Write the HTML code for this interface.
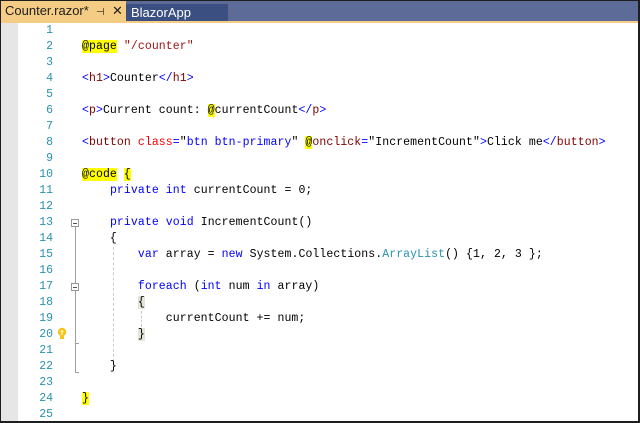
<!DOCTYPE html>
<html><head><style>
body{margin:0;width:640px;height:423px;overflow:hidden;background:#fff;position:relative;font-family:"Liberation Mono",monospace}
.tabbar{position:absolute;left:1px;top:1px;width:638px;height:20px;background:#5d6b99}
.tab1{position:absolute;left:0;top:0;width:125px;height:20px;background:#f5cc84;font:13px "Liberation Sans",sans-serif;color:#1e1e1e;line-height:20px;padding-left:4px;box-sizing:border-box;white-space:nowrap}
.tab2{position:absolute;left:125px;top:3px;width:102px;height:17px;background:#3b4f81;font:13px "Liberation Sans",sans-serif;color:#fff;line-height:17px;padding-left:5px;box-sizing:border-box}
.uline{position:absolute;left:1px;top:21px;width:638px;height:2px;background:#f5cc84}
.gut{position:absolute;left:1px;top:23px;width:17px;height:398px;background:#e6e6e6}
.ln{position:absolute;left:18px;width:35px;text-align:right;font-size:11.5px;color:#2b91af;line-height:16px}
.cd{position:absolute;left:82px;font-size:11.5px;letter-spacing:0.08px;line-height:16px;white-space:pre;color:#000}
.k{color:#0000ff}.t{color:#800000}.a{color:#ff0000}.s{color:#a31515}.ty{color:#2b91af}
.y{background:#ffff00}.g{background:#e2e6d6}
.fold{position:absolute;left:71px;width:8px;height:8px;border:1px solid #999;background:#fff;box-sizing:border-box}
.fold:after{content:"";position:absolute;left:1px;top:3px;width:4px;height:1px;background:#555}
.vl{position:absolute;width:1px;background:#a0a0a0}
.dl{position:absolute;width:0;border-left:1px dashed #ccc}
</style></head><body>
<div class="tabbar"><div class="tab1">Counter.razor*&nbsp;&nbsp;<span style="font-size:10px">⊣</span>&nbsp;&nbsp;✕</div><div class="tab2">BlazorApp</div></div>
<div class="uline"></div>
<div class="gut"></div>
<div class="ln" style="top:23px">1</div><div class="ln" style="top:39px">2</div><div class="ln" style="top:55px">3</div><div class="ln" style="top:71px">4</div><div class="ln" style="top:87px">5</div><div class="ln" style="top:103px">6</div><div class="ln" style="top:119px">7</div><div class="ln" style="top:135px">8</div><div class="ln" style="top:151px">9</div><div class="ln" style="top:167px">10</div><div class="ln" style="top:183px">11</div><div class="ln" style="top:199px">12</div><div class="ln" style="top:215px">13</div><div class="ln" style="top:231px">14</div><div class="ln" style="top:247px">15</div><div class="ln" style="top:263px">16</div><div class="ln" style="top:279px">17</div><div class="ln" style="top:295px">18</div><div class="ln" style="top:311px">19</div><div class="ln" style="top:327px">20</div><div class="ln" style="top:343px">21</div><div class="ln" style="top:359px">22</div><div class="ln" style="top:375px">23</div><div class="ln" style="top:391px">24</div><div class="ln" style="top:407px">25</div>
<div class="fold" style="top:219px"></div><div class="fold" style="top:283px"></div>
<div class="vl" style="left:75px;top:227px;height:56px"></div>
<div class="vl" style="left:75px;top:291px;height:81px"></div>
<div style="position:absolute;left:75px;top:343px;width:4px;height:1px;background:#a0a0a0"></div>
<div style="position:absolute;left:75px;top:372px;width:4px;height:1px;background:#a0a0a0"></div>
<div class="dl" style="left:113px;top:247px;height:120px"></div>
<div class="dl" style="left:141px;top:311px;height:16px"></div>
<svg style="position:absolute;left:57px;top:327px" width="10" height="14" viewBox="0 0 10 14"><circle cx="5" cy="5" r="4.2" fill="#f5c518"/><rect x="3" y="9" width="4" height="3" fill="#f5c518"/><path d="M3.5 4h3M5 4v4" stroke="#fff" stroke-width="1"/></svg>
<div class="cd" style="top:39px"><span class="y">@page</span> <span class="s">"/counter"</span></div>
<div class="cd" style="top:71px"><span class="k">&lt;</span><span class="t">h1</span><span class="k">&gt;</span>Counter<span class="k">&lt;/</span><span class="t">h1</span><span class="k">&gt;</span></div>
<div class="cd" style="top:103px"><span class="k">&lt;</span><span class="t">p</span><span class="k">&gt;</span>Current count: <span class="y">@</span>currentCount<span class="k">&lt;/</span><span class="t">p</span><span class="k">&gt;</span></div>
<div class="cd" style="top:135px"><span class="k">&lt;</span><span class="t">button</span> <span class="a">class</span><span class="k">=</span>"<span class="k">btn btn-primary</span>" <span class="y">@</span><span class="t">onclick</span><span class="k">=</span>"IncrementCount"<span class="k">&gt;</span>Click me<span class="k">&lt;/</span><span class="t">button</span><span class="k">&gt;</span></div>
<div class="cd" style="top:167px"><span class="y">@code</span> <span class="y">{</span></div>
<div class="cd" style="top:183px">    <span class="k">private</span> <span class="k">int</span> currentCount = 0;</div>
<div class="cd" style="top:215px">    <span class="k">private</span> <span class="k">void</span> IncrementCount()</div>
<div class="cd" style="top:231px">    {</div>
<div class="cd" style="top:247px">        <span class="k">var</span> array = <span class="k">new</span> System.Collections.<span class="ty">ArrayList</span>() {1, 2, 3 };</div>
<div class="cd" style="top:279px">        <span class="k">foreach</span> (<span class="k">int</span> num <span class="k">in</span> array)</div>
<div class="cd" style="top:295px">        <span class="g">{</span></div>
<div class="cd" style="top:311px">            currentCount += num;</div>
<div class="cd" style="top:327px">        <span class="g">}</span></div>
<div class="cd" style="top:359px">    }</div>
<div class="cd" style="top:391px"><span class="y">}</span></div>
<div style="position:absolute;left:0;top:421px;width:640px;height:2px;background:#1e1e1e"></div>
<div style="position:absolute;left:638px;top:0;width:2px;height:423px;background:#1e1e1e"></div>
<div style="position:absolute;left:0;top:0;width:640px;height:1px;background:#1e1e1e"></div>
<div style="position:absolute;left:0;top:0;width:1px;height:423px;background:#1e1e1e"></div>
</body></html>
